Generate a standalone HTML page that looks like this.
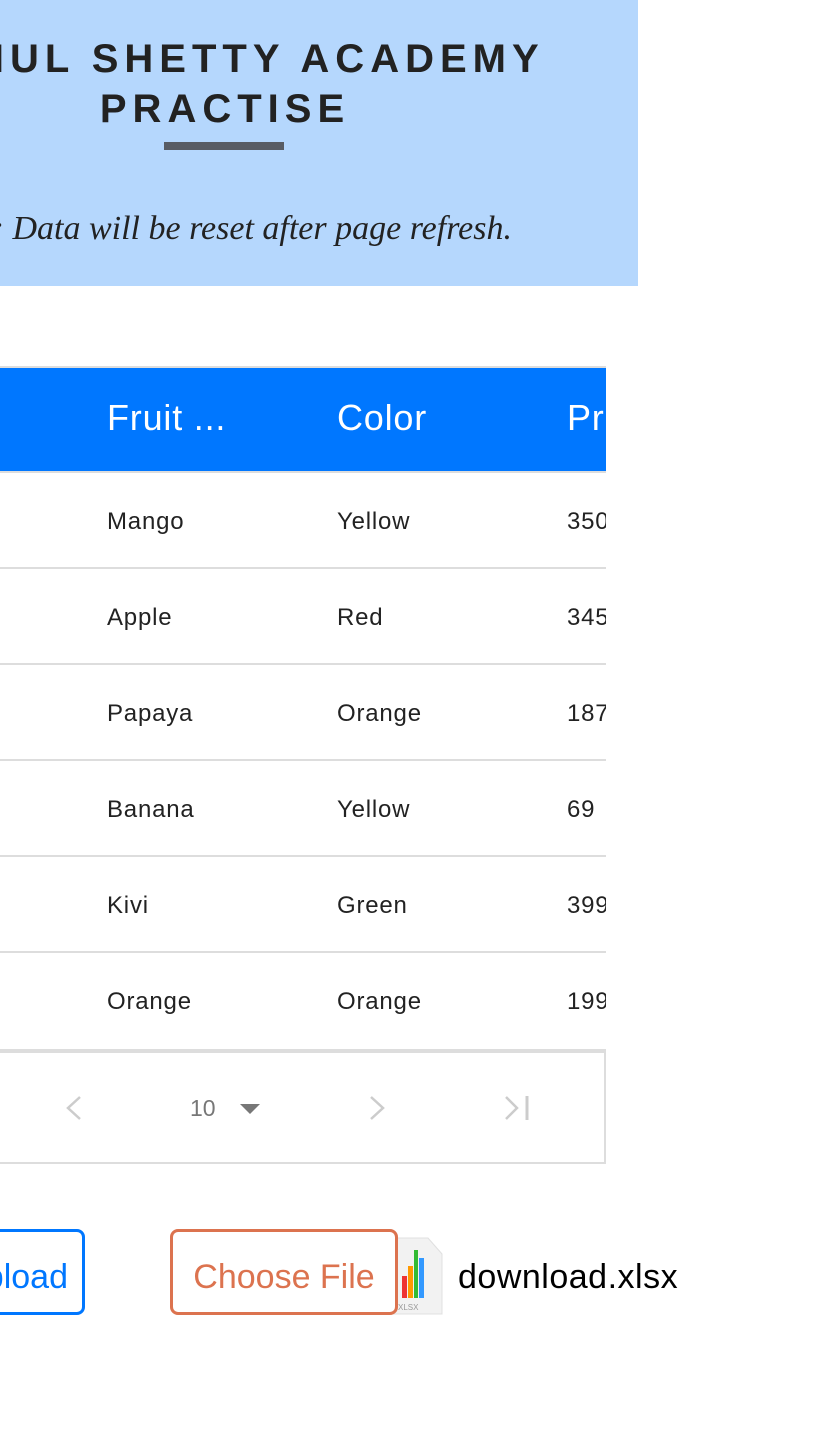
<!DOCTYPE html>
<html><head><meta charset="utf-8"><style>
*{margin:0;padding:0;box-sizing:border-box}
body{width:828px;height:1430px;position:relative;overflow:hidden;background:#fff;font-family:"Liberation Sans",sans-serif}
.hdr{position:absolute;left:0;top:0;width:638px;height:286px;background:#b5d7fd;overflow:hidden}
.title{position:absolute;left:-300px;width:1044px;top:34px;text-align:center;font-weight:bold;font-size:40px;letter-spacing:6px;line-height:50px;color:#222;padding-left:6px}
.bar{position:absolute;left:164px;top:142px;width:120px;height:8px;background:#585c64}
.note{position:absolute;right:126px;top:210px;white-space:nowrap;font-family:"Liberation Serif",serif;font-style:italic;font-size:34px;color:#222}
.tbl{position:absolute;left:0;top:366px;width:606px;overflow:hidden}
.th{height:107px;border-top:2px solid #ddd;border-bottom:2px solid #ddd;background:#0077ff;position:relative}
.th span{position:absolute;top:29px;color:#fff;font-size:36px;letter-spacing:0.8px;white-space:nowrap}
.tr{height:96px;border-bottom:2px solid #ddd;position:relative}
.tr span{position:absolute;top:35px;font-size:24px;letter-spacing:0.8px;color:#222;white-space:nowrap}
.c1{left:107px}.c2{left:337px}.c3{left:567px}
.pg{position:absolute;left:-5px;top:1049px;width:611px;height:115px;border:2px solid #ddd;border-top:4px solid #ddd}
.btn1{position:absolute;left:-100px;top:1229px;width:185px;height:86px;border:3px solid #0077ff;border-radius:8px;color:#0077ff;font-size:34px;padding:26px 0 0 0;text-align:right;padding-right:14px}
.btn2{position:absolute;left:170px;top:1229px;width:228px;height:86px;border:3px solid #dc734f;border-radius:8px;color:#dc734f;font-size:34px;padding-top:26px;text-align:center;background:#fff;z-index:2;white-space:nowrap}
.fname{position:absolute;left:458px;top:1258px;font-size:34px;letter-spacing:0.5px;color:#000}
</style></head><body>
<div class="hdr">
<div class="title">RAHUL SHETTY ACADEMY<br>PRACTISE</div>
<div class="bar"></div>
<div class="note">Note: Data will be reset after page refresh.</div>
</div>
<div class="tbl">
<div class="th"><span class="c1">Fruit ...</span><span class="c2">Color</span><span class="c3">Price</span></div>
<div class="tr"><span class="c1">Mango</span><span class="c2">Yellow</span><span class="c3">3500</span></div>
<div class="tr"><span class="c1">Apple</span><span class="c2">Red</span><span class="c3">3450</span></div>
<div class="tr"><span class="c1">Papaya</span><span class="c2">Orange</span><span class="c3">1870</span></div>
<div class="tr"><span class="c1">Banana</span><span class="c2">Yellow</span><span class="c3">69</span></div>
<div class="tr"><span class="c1">Kivi</span><span class="c2">Green</span><span class="c3">3990</span></div>
<div class="tr" style="border-bottom:none"><span class="c1">Orange</span><span class="c2">Orange</span><span class="c3">1999</span></div>
</div>
<div class="pg"></div>
<svg style="position:absolute;left:0;top:1090px" width="606" height="40">
<path d="M80 7 L68 18 L80 29" stroke="#ccc" stroke-width="2.5" fill="none"/>
<text x="190" y="26" font-family="Liberation Sans" font-size="23" fill="#777">10</text>
<path d="M240 14 L260 14 L250 24 Z" fill="#777"/>
<path d="M371 7 L383 18 L371 29" stroke="#ccc" stroke-width="2.5" fill="none"/>
<path d="M506 7 L517 18 L506 29" stroke="#ccc" stroke-width="2.5" fill="none"/>
<path d="M527 6 L527 30" stroke="#ccc" stroke-width="3"/>
</svg>
<div class="btn1">Upload</div>
<svg style="position:absolute;left:380px;top:1236px" width="64" height="80">
<path d="M8 2 L48 2 L62 18 L62 78 L8 78 Z" fill="#f2f2f2" stroke="#e0e0e0"/>
<rect x="22" y="40" width="5" height="22" fill="#e33"/>
<rect x="28" y="30" width="5" height="32" fill="#f90"/>
<rect x="34" y="14" width="4" height="48" fill="#3b3"/>
<rect x="39" y="22" width="5" height="40" fill="#39f"/>
<text x="18" y="74" font-size="8" fill="#999" font-family="Liberation Sans">XLSX</text>
</svg>
<div class="btn2">Choose File</div>
<div class="fname">download.xlsx</div>
</body></html>
